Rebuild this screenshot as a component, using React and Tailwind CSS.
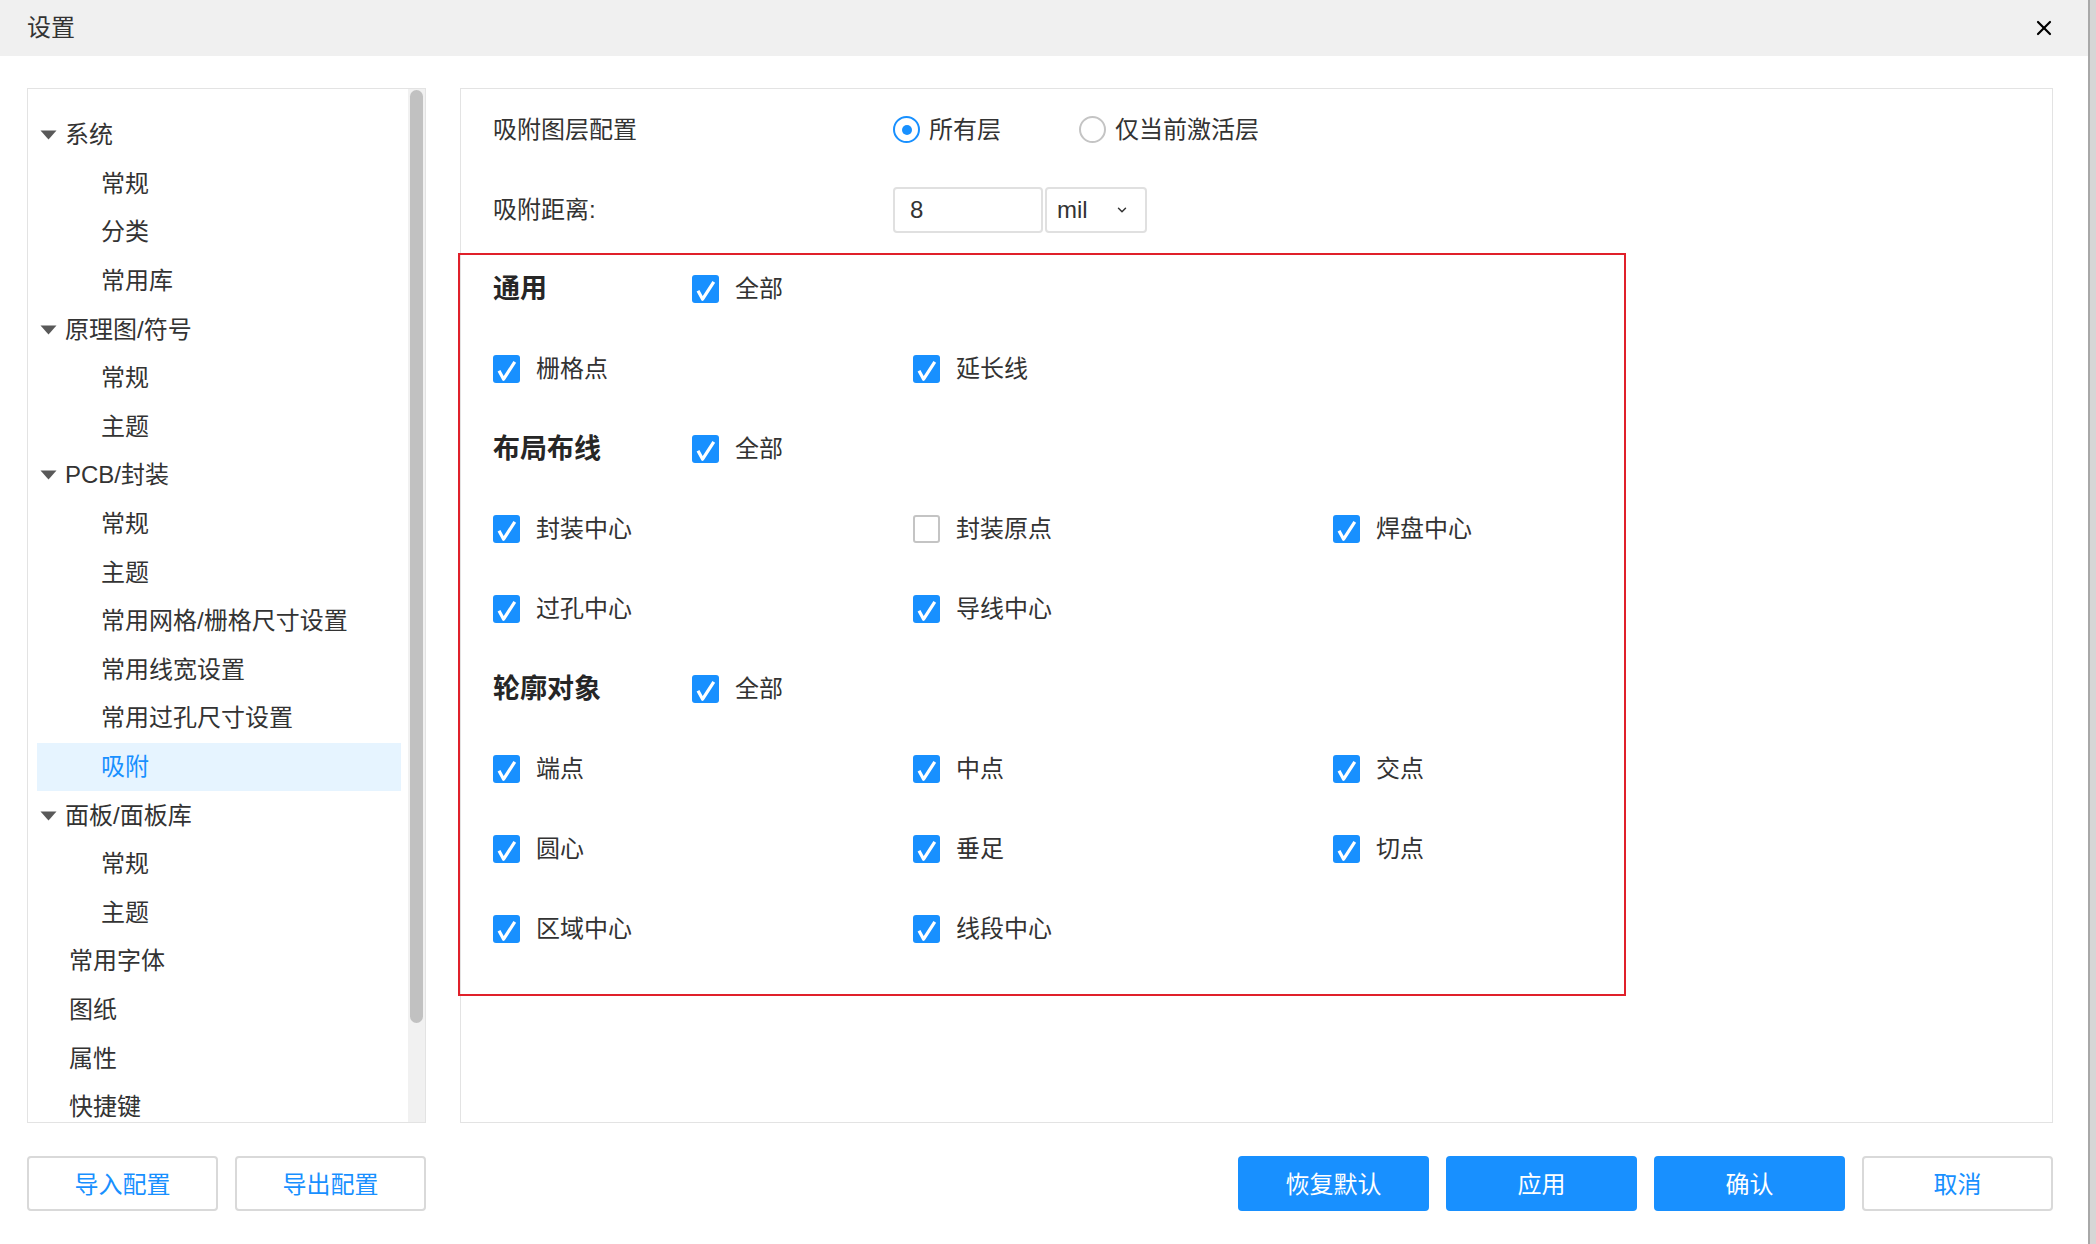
import React from 'react';
import { X, ChevronDown } from 'lucide-react';

const font = { fontFamily: '"Liberation Sans", "Noto Sans CJK SC", sans-serif' };

const tree = [
  { label: '系统', level: 1 },
  { label: '常规', level: 2 },
  { label: '分类', level: 2 },
  { label: '常用库', level: 2 },
  { label: '原理图/符号', level: 1 },
  { label: '常规', level: 2 },
  { label: '主题', level: 2 },
  { label: 'PCB/封装', level: 1 },
  { label: '常规', level: 2 },
  { label: '主题', level: 2 },
  { label: '常用网格/栅格尺寸设置', level: 2 },
  { label: '常用线宽设置', level: 2 },
  { label: '常用过孔尺寸设置', level: 2 },
  { label: '吸附', level: 2, active: true },
  { label: '面板/面板库', level: 1 },
  { label: '常规', level: 2 },
  { label: '主题', level: 2 },
  { label: '常用字体', level: 0 },
  { label: '图纸', level: 0 },
  { label: '属性', level: 0 },
  { label: '快捷键', level: 0 },
];

const sections = [
  { title: '通用', items: [['栅格点', true], ['延长线', true]] },
  {
    title: '布局布线',
    items: [['封装中心', true], ['封装原点', false], ['焊盘中心', true], ['过孔中心', true], ['导线中心', true]],
  },
  {
    title: '轮廓对象',
    items: [['端点', true], ['中点', true], ['交点', true], ['圆心', true], ['垂足', true], ['切点', true], ['区域中心', true], ['线段中心', true]],
  },
];

function Checkbox({ checked }) {
  if (!checked) {
    return <span className="block w-[27px] h-[28px] rounded-[3px] border-2 border-[#c4c4c4] bg-white shrink-0" />;
  }
  return (
    <span className="flex items-center justify-center w-[27px] h-[28px] rounded-[3px] bg-[#1890ff] shrink-0">
      <svg width="27" height="28" viewBox="0 0 27 28">
        <path d="M6 15.8 L10.6 24.2 L21.8 6.8" fill="none" stroke="#fff" strokeWidth="3.2" strokeLinejoin="round" />
      </svg>
    </span>
  );
}

function CheckItem({ label, checked }) {
  return (
    <div className="flex items-center gap-[16px]">
      <Checkbox checked={checked} />
      <span className="text-[24px] leading-[32px] text-[#333]">{label}</span>
    </div>
  );
}

function Triangle() {
  return (
    <svg width="17" height="10" viewBox="0 0 17 10" className="shrink-0">
      <path d="M0.5 0.5 H16.5 L8.5 9.5 Z" fill="#595959" />
    </svg>
  );
}

function TreeRow({ item }) {
  return (
    <div
      className={`flex items-center h-[48.6px] shrink-0 text-[24px] ${
        item.active ? 'bg-[#e6f4ff] text-[#1890ff]' : 'text-[#333]'
      }`}
    >
      {item.level === 1 && (
        <div className="flex items-center pl-[3px] gap-[8px]">
          <Triangle />
          <span>{item.label}</span>
        </div>
      )}
      {item.level === 2 && <span className="pl-[64px]">{item.label}</span>}
      {item.level === 0 && <span className="pl-[32px]">{item.label}</span>}
    </div>
  );
}

function Radio({ checked, label }) {
  return (
    <div className="flex items-center gap-[9px]">
      {checked ? (
        <span className="flex items-center justify-center w-[27px] h-[27px] rounded-full border-2 border-[#1890ff] bg-white">
          <span className="w-[10px] h-[10px] rounded-full bg-[#1890ff]" />
        </span>
      ) : (
        <span className="block w-[27px] h-[27px] rounded-full border-2 border-[#c4c4c4] bg-white" />
      )}
      <span className="text-[24px] text-[#333]">{label}</span>
    </div>
  );
}

function Button({ primary, children }) {
  return (
    <button
      className={`w-[191px] h-[55px] rounded-[4px] text-[24px] flex items-center justify-center pt-[2px] ${
        primary ? 'bg-[#1890ff] text-white' : 'bg-white text-[#1890ff] border-2 border-[#d9d9d9]'
      }`}
    >
      {children}
    </button>
  );
}

export default function App() {
  return (
    <div className="flex w-[2096px] h-[1244px] bg-white overflow-hidden" style={font}>
      <div className="flex flex-col w-[2088px] h-full">
        <header className="flex items-center justify-between h-[56px] bg-[#f0f0f0] pl-[27px] pr-[32px]">
          <span className="text-[24px] text-[#333]">设置</span>
          <X className="w-[24px] h-[24px] text-black" strokeWidth={2.2} />
        </header>

        <div className="flex pl-[27px] pt-[32px] gap-[34px]">
          {/* left tree panel */}
          <div className="flex w-[399px] h-[1035px] border border-[#e3e3e3]">
            <div className="flex-1 flex flex-col pl-[9px] pr-[7px] pt-[22px] overflow-hidden">
              {tree.map((item, i) => (
                <TreeRow key={i} item={item} />
              ))}
            </div>
            <div className="w-[17px] h-full bg-[#f1f1f1] flex justify-center">
              <div className="w-[13px] h-[933px] mt-[1px] rounded-full bg-[#c1c1c1]" />
            </div>
          </div>

          {/* right settings panel */}
          <div className="flex flex-col w-[1593px] h-[1035px] border border-[#e3e3e3]">
            <div className="flex items-center h-[81px] pl-[32px] text-[24px] text-[#333]">
              <span className="w-[400px]">吸附图层配置</span>
              <div className="flex items-center gap-[78px]">
                <Radio checked label="所有层" />
                <Radio label="仅当前激活层" />
              </div>
            </div>
            <div className="flex items-center h-[80px] pl-[32px] text-[24px] text-[#333]">
              <span className="w-[400px]">吸附距离:</span>
              <div className="flex items-center gap-[2px]">
                <div className="flex items-center w-[150px] h-[46px] border-2 border-[#e0e0e0] rounded-[4px] pl-[15px]">8</div>
                <div className="flex items-center justify-between w-[102px] h-[46px] border-2 border-[#e0e0e0] rounded-[4px] pl-[10px] pr-[16px]">
                  <span>mil</span>
                  <ChevronDown className="w-[14px] h-[14px] text-[#333]" strokeWidth={2.5} />
                </div>
              </div>
            </div>

            <div className="ml-[-3px] mt-[3px] w-[1168px] h-[743px] border-2 border-[#e0202a] pl-[33px] pt-[2px] flex flex-col">
              {sections.map((sec, si) => (
                <React.Fragment key={sec.title}>
                  <div className={`flex items-center ${si === 0 ? 'h-[64px]' : 'h-[80px]'}`}>
                    <span className="w-[199px] text-[27px] font-bold text-[#262626]">{sec.title}</span>
                    <CheckItem label="全部" checked />
                  </div>
                  <div
                    className={`grid grid-cols-[420px_420px_200px] auto-rows-[80px] items-center ${
                      si === 0 ? 'mt-[8px]' : ''
                    }`}
                  >
                    {sec.items.map(([label, checked]) => (
                      <CheckItem key={label} label={label} checked={checked} />
                    ))}
                  </div>
                </React.Fragment>
              ))}
            </div>
          </div>
        </div>

        <div className="flex items-center pl-[27px] pt-[33px]">
          <div className="flex gap-[17px]">
            <Button>导入配置</Button>
            <Button>导出配置</Button>
          </div>
          <div className="flex gap-[17px] ml-auto mr-[35px]">
            <Button primary>恢复默认</Button>
            <Button primary>应用</Button>
            <Button primary>确认</Button>
            <Button>取消</Button>
          </div>
        </div>
      </div>
      <div className="w-[8px] h-full border-l-2 border-[#a8a8a8] bg-[#d6d6d6]" />
    </div>
  );
}
